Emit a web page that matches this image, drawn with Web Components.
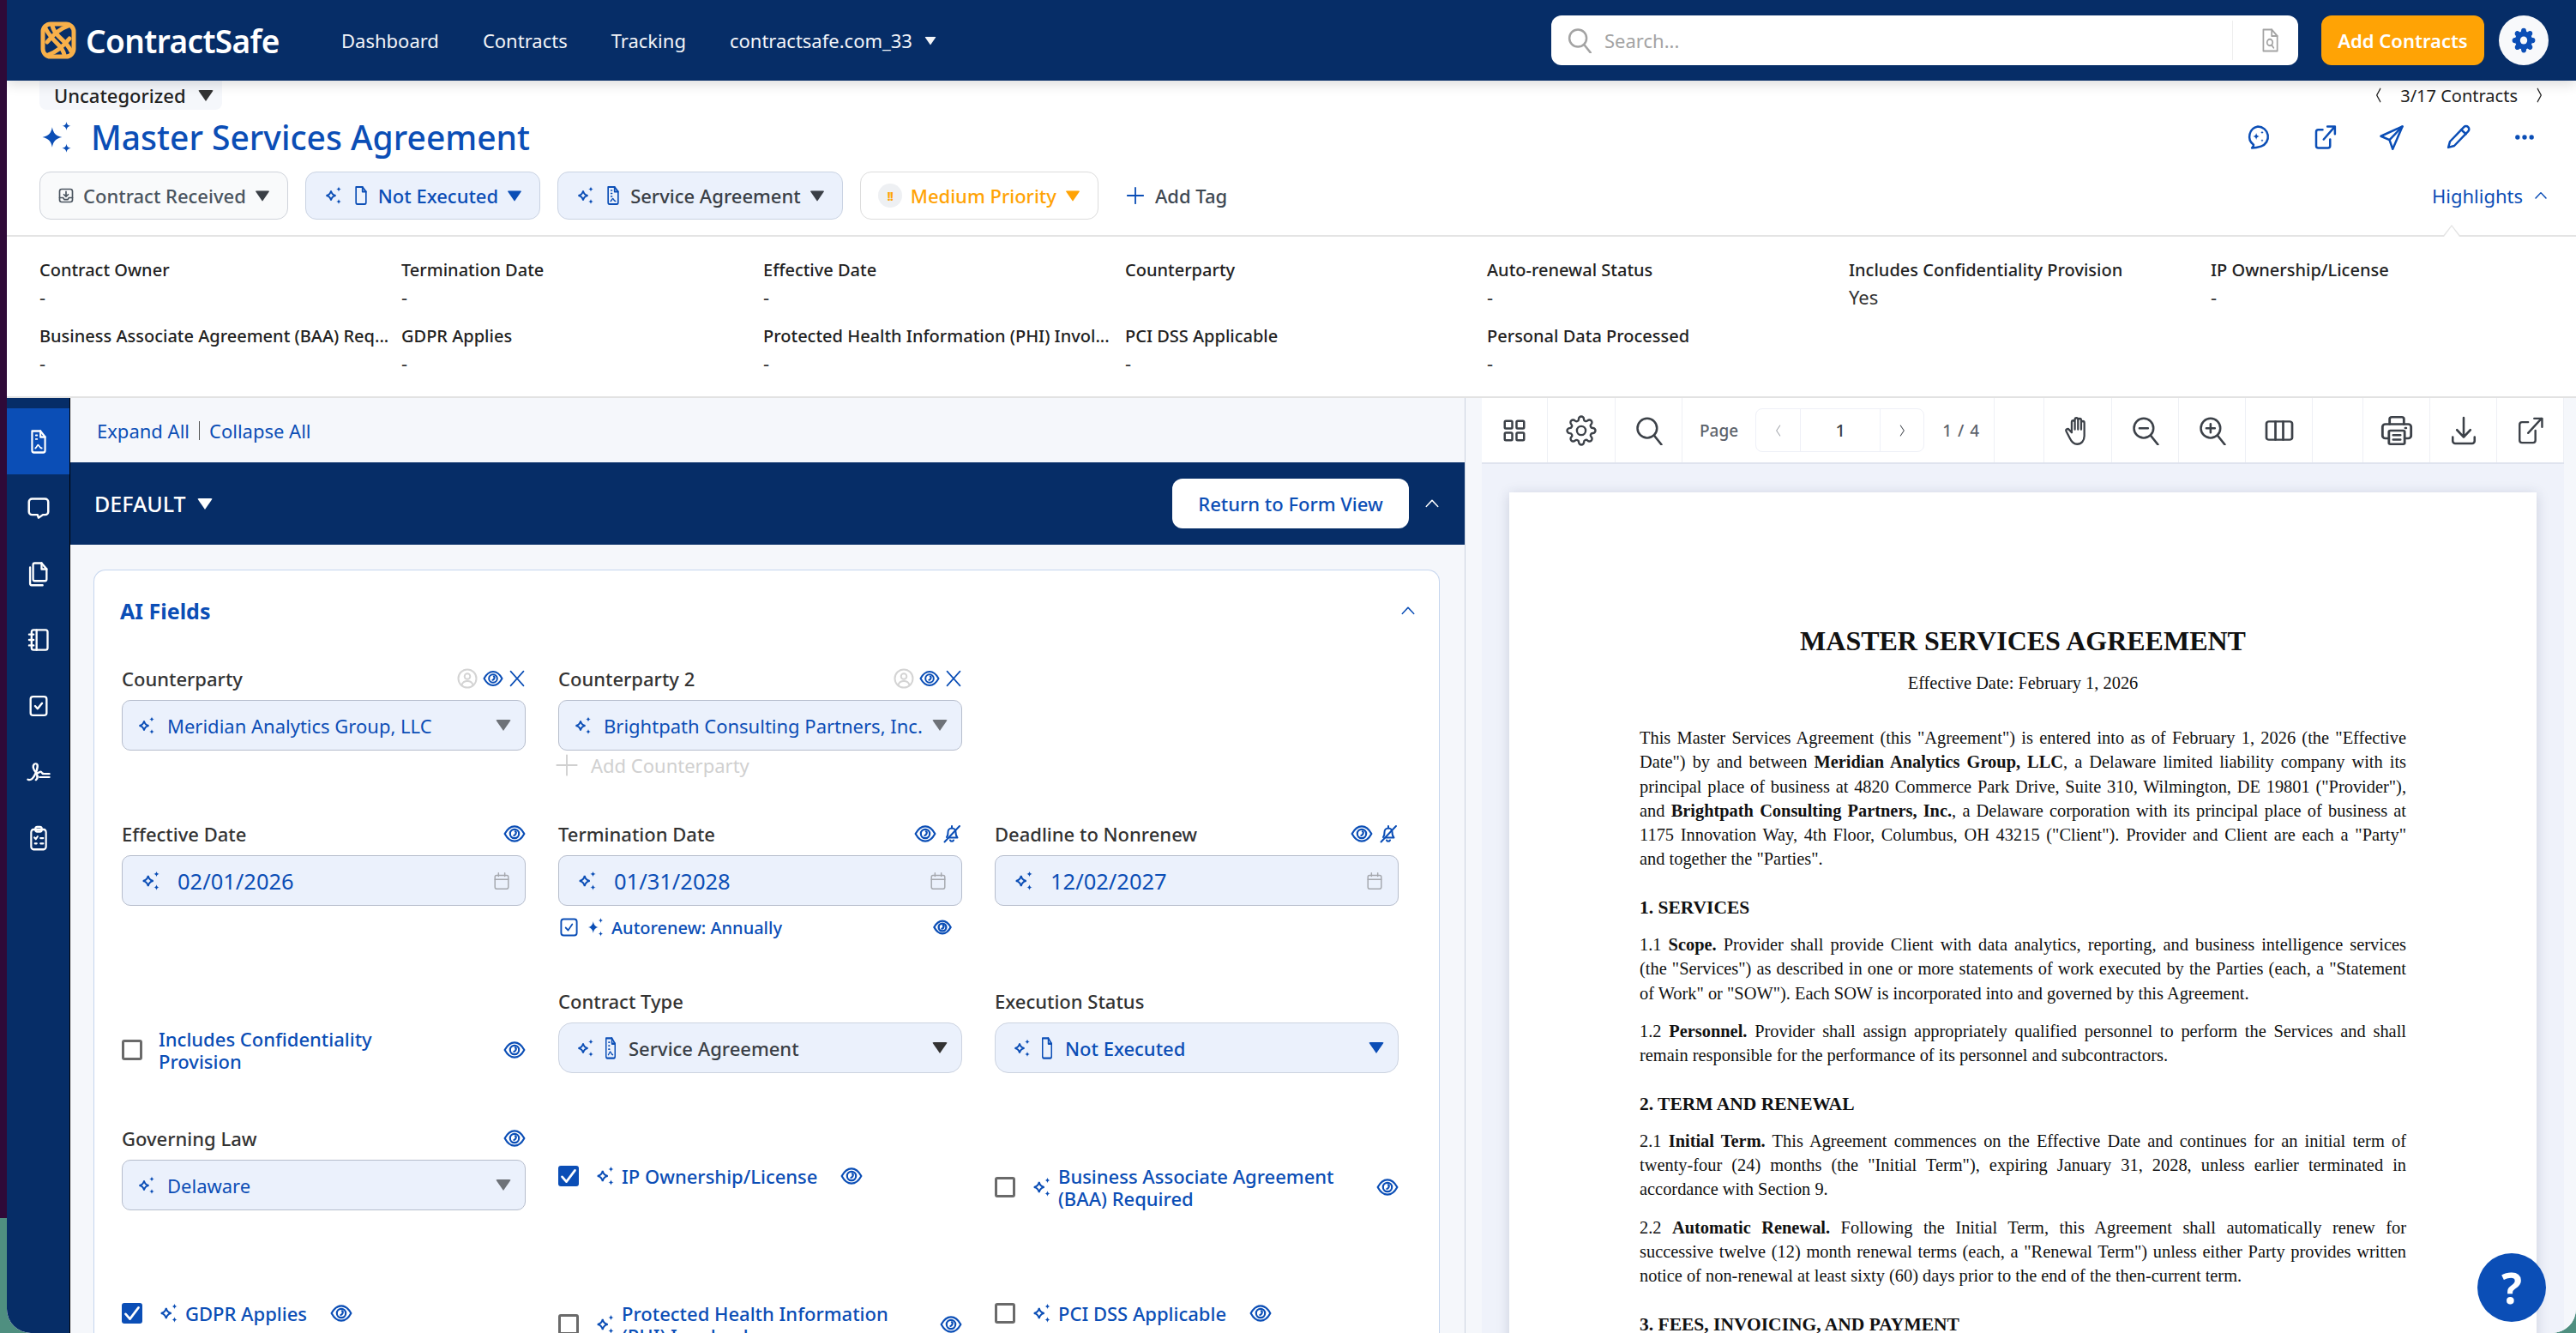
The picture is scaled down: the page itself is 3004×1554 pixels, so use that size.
<!DOCTYPE html>
<html lang="en">
<head>
<meta charset="utf-8">
<title>ContractSafe</title>
<style>
html, body { margin: 0; height: 1554px; overflow: hidden; }
body {
  background: linear-gradient(#2f0a38 0, #2f0a38 1420px, #4f8f80 1420px, #4f8f80 100%);
  font: 22px "Noto Sans", sans-serif;
  color: #333;
}
</style>
</head>
<body>
<cs-app>
  <cs-topbar></cs-topbar>
  <cs-record-header></cs-record-header>
  <cs-highlights>
    <cs-hl label="Contract Owner">-</cs-hl>
    <cs-hl label="Termination Date">-</cs-hl>
    <cs-hl label="Effective Date">-</cs-hl>
    <cs-hl label="Counterparty"></cs-hl>
    <cs-hl label="Auto-renewal Status">-</cs-hl>
    <cs-hl label="Includes Confidentiality Provision">Yes</cs-hl>
    <cs-hl label="IP Ownership/License">-</cs-hl>
    <cs-hl label="Business Associate Agreement (BAA) Req...">-</cs-hl>
    <cs-hl label="GDPR Applies">-</cs-hl>
    <cs-hl label="Protected Health Information (PHI) Invol...">-</cs-hl>
    <cs-hl label="PCI DSS Applicable">-</cs-hl>
    <cs-hl label="Personal Data Processed">-</cs-hl>
  </cs-highlights>
  <cs-workspace>
    <cs-sidebar></cs-sidebar>
    <cs-form-panel>
      <cs-form-grid>
        <cs-field label="Counterparty">
          <cs-icon slot="actions" name="person" w="24" h="24" style="color:#d4d4d4"></cs-icon>
          <cs-icon slot="actions" name="eye" w="24" h="24"></cs-icon>
          <cs-icon slot="actions" name="x" w="20" h="20"></cs-icon>
          <cs-select spark caret="gray">Meridian Analytics Group, LLC</cs-select>
        </cs-field>
        <cs-field label="Counterparty 2">
          <cs-icon slot="actions" name="person" w="24" h="24" style="color:#d4d4d4"></cs-icon>
          <cs-icon slot="actions" name="eye" w="24" h="24"></cs-icon>
          <cs-icon slot="actions" name="x" w="20" h="20"></cs-icon>
          <cs-select spark caret="gray">Brightpath Consulting Partners, Inc.</cs-select>
          <cs-add-row>Add Counterparty</cs-add-row>
        </cs-field>
        <div></div>

        <cs-field label="Effective Date">
          <cs-icon slot="actions" name="eye" w="26" h="26"></cs-icon>
          <cs-select spark date>02/01/2026</cs-select>
        </cs-field>
        <cs-field label="Termination Date">
          <cs-icon slot="actions" name="eye" w="26" h="26"></cs-icon>
          <cs-icon slot="actions" name="belloff" w="24" h="24"></cs-icon>
          <cs-select spark date>01/31/2028</cs-select>
          <cs-autorenew>Autorenew: Annually</cs-autorenew>
        </cs-field>
        <cs-field label="Deadline to Nonrenew">
          <cs-icon slot="actions" name="eye" w="26" h="26"></cs-icon>
          <cs-icon slot="actions" name="belloff" w="24" h="24"></cs-icon>
          <cs-select spark date>12/02/2027</cs-select>
        </cs-field>

        <cs-check drop wide nospark>Includes Confidentiality<br>Provision</cs-check>
        <cs-field label="Contract Type">
          <cs-select spark doc="contract" tone="dark" round caret="dark">Service Agreement</cs-select>
        </cs-field>
        <cs-field label="Execution Status">
          <cs-select spark doc="blank" round caret="blue">Not Executed</cs-select>
        </cs-field>

        <cs-field label="Governing Law">
          <cs-icon slot="actions" name="eye" w="26" h="26"></cs-icon>
          <cs-select spark caret="gray">Delaware</cs-select>
        </cs-field>
        <cs-check drop checked>IP Ownership/License</cs-check>
        <cs-check drop wide>Business Associate Agreement<br>(BAA) Required</cs-check>

        <cs-check checked>GDPR Applies</cs-check>
        <cs-check wide>Protected Health Information<br>(PHI) Involved</cs-check>
        <cs-check>PCI DSS Applicable</cs-check>
      </cs-form-grid>
    </cs-form-panel>
    <cs-viewer></cs-viewer>
  </cs-workspace>
  <cs-help></cs-help>
</cs-app>

<script>
const BLUE = "#0b4eb6";

// stroke icons share one svg wrapper, the markup is just the inside of a 24x24 box
const ICONS = {
  search: `<circle cx="10.5" cy="10" r="8"/><path d="M16.2 16l6 7.5"/>`,
  docsearch: `<path d="M5 2h9l6 6v14H5z"/><path d="M14 2v6h6"/><circle cx="12" cy="14" r="3"/><path d="M14 16.5l2 2.5"/>`,
  gearfill: `<path fill="currentColor" stroke-width="1" d="M19.4 15a1.65 1.65 0 0 0 .33 1.82l.06.06a2 2 0 0 1 0 2.83 2 2 0 0 1-2.83 0l-.06-.06a1.65 1.65 0 0 0-1.82-.33 1.65 1.65 0 0 0-1 1.51V21a2 2 0 0 1-2 2 2 2 0 0 1-2-2v-.09A1.65 1.65 0 0 0 9 19.4a1.65 1.65 0 0 0-1.82.33l-.06.06a2 2 0 0 1-2.83 0 2 2 0 0 1 0-2.83l.06-.06a1.65 1.65 0 0 0 .33-1.82 1.65 1.65 0 0 0-1.51-1H3a2 2 0 0 1-2-2 2 2 0 0 1 2-2h.09A1.65 1.65 0 0 0 4.6 9a1.65 1.65 0 0 0-.33-1.82l-.06-.06a2 2 0 0 1 0-2.83 2 2 0 0 1 2.83 0l.06.06a1.65 1.65 0 0 0 1.82.33H9a1.65 1.65 0 0 0 1-1.51V3a2 2 0 0 1 2-2 2 2 0 0 1 2 2v.09a1.65 1.65 0 0 0 1 1.51 1.65 1.65 0 0 0 1.82-.33l.06-.06a2 2 0 0 1 2.83 0 2 2 0 0 1 0 2.83l-.06.06a1.65 1.65 0 0 0-.33 1.82V9a1.65 1.65 0 0 0 1.51 1H21a2 2 0 0 1 2 2 2 2 0 0 1-2 2h-.09a1.65 1.65 0 0 0-1.51 1z"/><circle cx="12" cy="12" r="3.6" fill="#f8f9fb" stroke="none"/>`,
  gear: `<path d="M19.4 15a1.65 1.65 0 0 0 .33 1.82l.06.06a2 2 0 0 1 0 2.83 2 2 0 0 1-2.83 0l-.06-.06a1.65 1.65 0 0 0-1.82-.33 1.65 1.65 0 0 0-1 1.51V21a2 2 0 0 1-2 2 2 2 0 0 1-2-2v-.09A1.65 1.65 0 0 0 9 19.4a1.65 1.65 0 0 0-1.82.33l-.06.06a2 2 0 0 1-2.83 0 2 2 0 0 1 0-2.83l.06-.06a1.65 1.65 0 0 0 .33-1.82 1.65 1.65 0 0 0-1.51-1H3a2 2 0 0 1-2-2 2 2 0 0 1 2-2h.09A1.65 1.65 0 0 0 4.6 9a1.65 1.65 0 0 0-.33-1.82l-.06-.06a2 2 0 0 1 0-2.83 2 2 0 0 1 2.83 0l.06.06a1.65 1.65 0 0 0 1.82.33H9a1.65 1.65 0 0 0 1-1.51V3a2 2 0 0 1 2-2 2 2 0 0 1 2 2v.09a1.65 1.65 0 0 0 1 1.51 1.65 1.65 0 0 0 1.82-.33l.06-.06a2 2 0 0 1 2.83 0 2 2 0 0 1 0 2.83l-.06.06a1.65 1.65 0 0 0-.33 1.82V9a1.65 1.65 0 0 0 1.51 1H21a2 2 0 0 1 2 2 2 2 0 0 1-2 2h-.09a1.65 1.65 0 0 0-1.51 1z"/><circle cx="12" cy="12" r="3.4"/>`,
  spark: `<path stroke-width="1.8" stroke-linejoin="miter" d="M9 6.5C9.6 9.6 11.2 11.4 14.5 12 11.2 12.6 9.6 14.4 9 17.5 8.4 14.4 6.8 12.6 3.5 12 6.8 11.4 8.4 9.6 9 6.5z"/><path fill="currentColor" stroke="none" d="M18 1.5c.3 1.9 1 2.7 3 3-2 .3-2.7 1.1-3 3-.3-1.9-1-2.7-3-3 2-.3 2.7-1.1 3-3zM18 16c.3 1.9 1 2.7 3 3-2 .3-2.7 1.1-3 3-.3-1.9-1-2.7-3-3 2-.3 2.7-1.1 3-3z"/>`,
  sparkfill: `<path fill="currentColor" stroke="none" d="M8.5 5C9.2 9.2 11 11.2 15 12 11 12.8 9.2 14.8 8.5 19 7.8 14.8 6 12.8 2 12 6 11.2 7.8 9.2 8.5 5z"/><path fill="currentColor" stroke="none" d="M18 1c.3 2 1 2.8 3 3.1-2 .3-2.7 1.1-3 3.1-.3-2-1-2.8-3-3.1 2-.3 2.7-1.1 3-3.1zM18 16.500c.3 2 1 2.800 3 3.100-2 .3-2.700 1.100-3 3.100-.3-2-1-2.800-3-3.100 2-.3 2.700-1.100 3-3.100z"/>`,
  docblank: `<path d="M5 2h9l5 5.500V20a2 2 0 0 1-2 2H7a2 2 0 0 1-2-2z"/><path d="M14 2v5.500h5"/>`,
  doccontract: `<path d="M5 2h9l5 5.500V20a2 2 0 0 1-2 2H7a2 2 0 0 1-2-2z"/><path d="M14 2v5.500h5"/><path d="M9 6h1.500M9 9.500h1.500M9 13h1.500" stroke-width="1.500"/><path d="M8.500 18.500c1.500-.5 2-3 3-3s1.500 3 4 3" stroke-width="1.500"/>`,
  inbox: `<rect x="3" y="3" width="18" height="18" rx="3"/><path d="M3 15h5l1.500 2.500h5L16 15h5"/><path d="M12 6.500v6.500M9 10.500l3 3 3-3"/>`,
  chatspark: `<path d="M12 2a9.500 9.500 0 0 1 3 18.500c-2.500.8-5 1.500-8.500 1.500 1.200-1 1.600-2 1.500-3A9.500 9.500 0 0 1 12 2z"/><path fill="currentColor" stroke="none" d="M10.500 8c.3 2 1 2.800 3 3.200-2 .4-2.700 1.200-3 3.200-.3-2-1-2.800-3-3.200 2-.4 2.700-1.200 3-3.200zM16 6c.2 1 .5 1.300 1.500 1.500-1 .2-1.300.5-1.500 1.500-.2-1-.5-1.300-1.500-1.500 1-.2 1.300-.5 1.500-1.500zM16 13.500c.2 1 .5 1.300 1.500 1.500-1 .2-1.300.5-1.500 1.500-.2-1-.5-1.300-1.500-1.500 1-.2 1.300-.5 1.500-1.500z"/>`,
  external: `<path d="M10 5H6a2 2 0 0 0-2 2v13a2 2 0 0 0 2 2h9a2 2 0 0 0 2-2v-6"/><path d="M11 14L21 2.500M14.500 2H21.500V9"/>`,
  send: `<path stroke-linejoin="round" d="M22 2L2 11l8 3.500L13 23z"/><path d="M22 2L10 14.500"/>`,
  pencil: `<path stroke-linejoin="round" d="M17 2.500a2.800 2.800 0 0 1 4 4L8 20l-5.500 1.500L4 16z"/><path d="M14.500 5l4.500 4"/>`,
  dots: `<circle cx="5" cy="12" r="2.300" fill="currentColor" stroke="none"/><circle cx="12" cy="12" r="2.300" fill="currentColor" stroke="none"/><circle cx="19" cy="12" r="2.300" fill="currentColor" stroke="none"/>`,
  up: `<path d="M4 16.500L12 7l8 9.500"/>`,
  left: `<path d="M15 3L8 12l7 9"/>`,
  right: `<path d="M9 3l7 9-7 9"/>`,
  eye: `<path stroke-linejoin="round" d="M1.500 12C4.500 6.500 8 4 12 4s7.500 2.500 10.500 8C19.500 17.500 16 20 12 20S4.500 17.500 1.500 12z"/><circle cx="12" cy="12" r="4.800"/><path d="M12.800 9.500c.8.300 1 1.200.6 2.300-.3.800-1 1.700-2 2"/>`,
  x: `<path d="M3 2l18 20M21 2L3 22"/>`,
  person: `<circle cx="12" cy="12" r="10.500"/><circle cx="12" cy="9.500" r="3.300"/><path d="M5.500 19.500c1-3.500 3.500-4.500 6.500-4.500s5.500 1 6.500 4.500"/>`,
  belloff: `<path d="M6 16c1.500-1.500 1.500-3.500 1.500-6A4.500 4.500 0 0 1 12 5.500 4.500 4.500 0 0 1 16.500 10c0 2.500 0 4.500 2 6.500H9"/><path d="M10 19.500a2.200 2.200 0 0 0 4 0M12 3v2.500M3.500 21.500L21 3"/>`,
  calendar: `<rect x="3.500" y="5" width="17" height="17" rx="2"/><path d="M3.500 10h17M8 2v4M16 2v4"/>`,
  plus: `<path d="M12 2v20M2 12h20"/>`,
  boxcheck: `<rect x="2.500" y="2.500" width="19" height="19" rx="3"/><path d="M8 12.500l3 3 5-7" stroke-width="1.800"/>`,
  grid: `<rect x="3" y="3" width="7" height="7" rx="1"/><rect x="14" y="3" width="7" height="7" rx="1"/><rect x="3" y="14" width="7" height="7" rx="1"/><rect x="14" y="14" width="7" height="7" rx="1"/>`,
  hand: `<path stroke-linejoin="round" d="M7 13V5.500a1.300 1.300 0 0 1 2.600 0V11M9.600 11V3.500a1.300 1.300 0 0 1 2.600 0V11M12.200 11V4a1.300 1.300 0 0 1 2.600 0v7M14.800 11V6a1.300 1.300 0 0 1 2.600 0v10c0 4-2.500 6.500-5.900 6.500-3 0-4.500-1.500-6-4.500l-3-5.500c-.7-1.500 1.300-2.500 2.300-1.200L7 13.500"/>`,
  zoomout: `<circle cx="10.500" cy="10" r="8"/><path d="M16.200 16l6 7.500M7 10h7"/>`,
  zoomin: `<circle cx="10.500" cy="10" r="8"/><path d="M16.200 16l6 7.500M7 10h7M10.500 6.500v7"/>`,
  columns: `<rect x="2" y="3.500" width="20" height="17" rx="2"/><path d="M9 3.500v17M15 3.500v17"/>`,
  printer: `<path d="M7 7V3a1.500 1.500 0 0 1 1.500-1.500h7A1.500 1.500 0 0 1 17 3v4"/><path d="M6.500 18H4a2 2 0 0 1-2-2V9a2 2 0 0 1 2-2h16a2 2 0 0 1 2 2v7a2 2 0 0 1-2 2h-2.500"/><rect x="6.500" y="12" width="11" height="10.500" rx="1"/><path d="M9.500 15.500h5M9.500 19h5M18 10h.5"/>`,
  download: `<path d="M12 2v15M6.500 11.500L12 17l5.500-5.500M3 17v3a2 2 0 0 0 2 2h14a2 2 0 0 0 2-2v-3"/>`,
  openout: `<path d="M10 5H5a2 2 0 0 0-2 2v13a2 2 0 0 0 2 2h9a2 2 0 0 0 2-2v-8"/><path d="M10 14L21 2M15 2h6.500V9"/>`,
  sbfile: `<path d="M5 2h9l5 5.500V20a2 2 0 0 1-2 2H7a2 2 0 0 1-2-2z"/><path d="M14 2v5.500h5"/><path d="M9 6h1.500M9 9.500h1.500" stroke-width="1.500"/><path d="M8.500 18c1.500-.5 2-3 3-3s1.500 3 4 3" stroke-width="1.500"/>`,
  sbchat: `<path stroke-linejoin="round" d="M6 3h12a3 3 0 0 1 3 3v10a3 3 0 0 1-3 3h-2l-4 3-1-3H6a3 3 0 0 1-3-3V6a3 3 0 0 1 3-3z"/>`,
  sbdocs: `<path d="M8 2h7l5 5.500V17a1.500 1.500 0 0 1-1.500 1.500H8A1.500 1.500 0 0 1 6.500 17V3.500A1.500 1.500 0 0 1 8 2z"/><path d="M15 2v5.500h5M3.500 6v15a1.500 1.500 0 0 0 1.500 1.500h11"/>`,
  sbbook: `<rect x="5" y="2" width="16" height="20" rx="2"/><path d="M10 2v20M2.500 6.500h4.500M2.500 12h4.500M2.500 17.500h4.500"/>`,
  sbtask: `<rect x="4" y="2" width="16" height="20" rx="2.500"/><path d="M8.500 12l2.500 3 4.500-6" stroke-width="2"/>`,
  sbsign: `<path d="M2 20c3 1.500 5-1 7-6s3-11 .5-11S6 7 8 10c2.500 3.500 4 8 1.500 10.500"/><path d="M11 13c1.500 0 2-1.500 3-1.500s.5 2 2 2M13 17.500h9M16 14h6"/>`,
  sbclip: `<rect x="4" y="4" width="16" height="18.500" rx="2.500"/><rect x="8.500" y="1.500" width="7" height="4.500" rx="2"/><path d="M7.500 11.500l1.500 1.500 2-2.500M14 12h3M8 17h2M14 17h3" stroke-width="1.800"/>`
};

class CsIcon extends HTMLElement {
  connectedCallback() {
    if (this.shadowRoot) return;
    const w = this.getAttribute("w") || 24;
    const h = this.getAttribute("h") || w;
    const sw = this.getAttribute("sw") || 2;
    this.attachShadow({ mode: "open" });
    this.shadowRoot.innerHTML = `
      <style>:host{display:inline-flex;flex:none;width:${w}px;height:${h}px} svg{display:block}</style>
      <svg width="${w}" height="${h}" viewBox="0 0 24 24" preserveAspectRatio="none" fill="none" stroke="currentColor" stroke-width="${sw}" stroke-linecap="round" stroke-linejoin="round">${ICONS[this.getAttribute("name")] || ""}</svg>`;
  }
}
customElements.define("cs-icon", CsIcon);

// small triangle used by every dropdown
class CsCaret extends HTMLElement {
  constructor() {
    super();
    this.attachShadow({ mode: "open" });
    this.shadowRoot.innerHTML = `
      <style>:host{display:inline-block;flex:none;width:0;height:0;border-left:9px solid transparent;border-right:9px solid transparent;border-top:13px solid currentColor;border-radius:2px}</style>`;
  }
}
customElements.define("cs-caret", CsCaret);

const appTemplate = document.createElement("template");
appTemplate.innerHTML = `
<style>
:host{display:flex;flex-direction:column;position:relative;margin-left:8px;height:1554px;background:#fff;overflow:hidden;border-radius:0 0 28px 28px}
</style>
<slot></slot>`;
class CsApp extends HTMLElement {
  constructor() {
    super();
    this.attachShadow({ mode: "open" });
    this.shadowRoot.appendChild(appTemplate.content.cloneNode(true));
  }
}
customElements.define("cs-app", CsApp);

const topbarTemplate = document.createElement("template");
topbarTemplate.innerHTML = `
<style>
:host{display:flex;align-items:center;flex:none;height:94px;background:#062d67;color:#fff;padding:0 32px 0 38px;box-sizing:border-box;position:relative;z-index:2;box-shadow:0 4px 14px rgba(0,0,0,.14)}
.logo{display:flex;align-items:center;width:352px;flex:none;gap:10px;font-size:37px;font-weight:600;letter-spacing:-.6px}
nav{display:flex;align-items:center;flex:1;gap:51px;font-size:22px;color:#f2f4f8}
.acct{display:flex;align-items:center;gap:12px}
.acct cs-caret{transform:scale(.75)}
.search{display:flex;align-items:center;width:871px;height:58px;background:#fff;border-radius:12px;box-sizing:border-box;padding:0 20px 0 18px;color:#a3a3a3;gap:14px;font-size:22px}
.search span{flex:1}
.search i{width:1px;height:46px;background:#eee;margin-right:16px}
.add{display:flex;align-items:center;justify-content:center;width:190px;height:58px;margin-left:27px;background:#ffa305;border-radius:12px;font-size:22px;font-weight:600}
.gear{display:flex;align-items:center;justify-content:center;width:58px;height:58px;margin-left:17px;background:#f8f9fb;border-radius:50%;color:${BLUE}}
</style>
<div class="logo">
  <svg width="44" height="44" viewBox="0 0 44 44" fill="none" stroke="#f8b04a" stroke-width="5" stroke-linecap="round" stroke-linejoin="round">
    <path d="M13 3h18c5 0 9 4 9 9v20c0 5-4 9-9 9H13c-5 0-9-4-9-9V12c0-5 4-9 9-9z"/>
    <path d="M34 5C25 8 17 14 9 24M10 39c9-3 17-9 25-19"/>
    <path d="M7 8c4 8 10 14 14 18s7 8 8 13M15 5c1 5 4 9 8 13s10 8 14 17"/>
  </svg>
  <span>ContractSafe</span>
</div>
<nav>
  <span>Dashboard</span>
  <span>Contracts</span>
  <span>Tracking</span>
  <span class="acct">contractsafe.com_33<cs-caret></cs-caret></span>
</nav>
<div class="search">
  <cs-icon name="search" w="30" h="30"></cs-icon>
  <span>Search...</span>
  <i></i>
  <cs-icon name="docsearch" w="26" h="30" sw="1.6"></cs-icon>
</div>
<div class="add">Add Contracts</div>
<div class="gear"><cs-icon name="gearfill" w="28" h="30"></cs-icon></div>`;
class CsTopbar extends HTMLElement {
  constructor() {
    super();
    this.attachShadow({ mode: "open" });
    this.shadowRoot.appendChild(topbarTemplate.content.cloneNode(true));
  }
}
customElements.define("cs-topbar", CsTopbar);

const pillTemplate = document.createElement("template");
pillTemplate.innerHTML = `
<style>
:host{display:inline-flex;align-items:center;height:56px;box-sizing:border-box;padding:0 20px;gap:10px;border:1.5px solid #cfd3da;border-radius:13px;background:#f9fafb;color:#4b5560;font-size:22px;font-weight:500;white-space:nowrap}
:host([ai]){background:#ebf1fc;border-color:#c9d2e2}
:host([tone=blue]){color:${BLUE}}
:host([tone=dark]){color:#3a3f46}
:host([tone=orange]){background:#fff;color:#ffa305;border-color:#dcdcdc}
cs-caret{transform:scale(.95);color:var(--caret,#3a3f46)}
:host([tone=blue]) cs-caret{color:${BLUE}}
:host([tone=orange]) cs-caret{color:#ffa305}
::slotted(cs-icon){color:${BLUE}}
::slotted(.prio){display:inline-flex;align-items:center;justify-content:center;width:28px;height:28px;border-radius:50%;background:#eef0f3;color:#ffa305;font-size:15px;font-weight:700;letter-spacing:-1px}
</style>
<slot name="icons"></slot><slot></slot><cs-caret></cs-caret>`;
class CsPill extends HTMLElement {
  constructor() {
    super();
    this.attachShadow({ mode: "open" });
    this.shadowRoot.appendChild(pillTemplate.content.cloneNode(true));
  }
}
customElements.define("cs-pill", CsPill);

const headerTemplate = document.createElement("template");
headerTemplate.innerHTML = `
<style>
:host{display:flex;flex-direction:column;flex:none;height:182px;box-sizing:border-box;padding:0 34px 0 38px;border-bottom:2px solid #e4e4e4;background:#fff;position:relative}
.top{display:flex;justify-content:space-between;align-items:center;height:34px;flex:none}
.chip{display:flex;align-items:center;gap:14px;height:34px;box-sizing:border-box;padding:0 10px 0 17px;background:#f5f7fb;border-radius:0 0 8px 8px;color:#222;font-weight:500;font-size:22px}
.chip cs-caret{color:#333}
.count{display:flex;align-items:center;gap:18px;font-size:20px;color:#222;margin-right:2px}
.title{display:flex;align-items:center;height:60px;flex:none;gap:18px;margin-top:2px}
h1{flex:1;margin:0;font-size:39px;font-weight:500;color:${BLUE};line-height:60px}
.spark{color:${BLUE}}
.actions{display:flex;gap:48px;color:${BLUE};align-items:center;margin-right:12px}
.pills{display:flex;align-items:center;gap:20px;margin-top:10px}
.tag{display:flex;align-items:center;gap:12px;margin-left:12px;color:#3e4853;font-weight:500}
.tag cs-icon{color:${BLUE}}
.hl{margin-left:auto;display:flex;align-items:center;gap:12px;color:${BLUE};margin-right:-2px}
.notch{position:absolute;left:2840px;bottom:-2px;width:0;height:0;border-left:11px solid transparent;border-right:11px solid transparent;border-bottom:14px solid #e4e4e4}
.notch::after{content:"";position:absolute;left:-9px;top:2px;border-left:9px solid transparent;border-right:9px solid transparent;border-bottom:12px solid #fff}
</style>
<div class="top">
  <div class="chip">Uncategorized <cs-caret></cs-caret></div>
  <div class="count"><cs-icon name="left" w="14" h="20"></cs-icon>3/17 Contracts<cs-icon name="right" w="14" h="20"></cs-icon></div>
</div>
<div class="title">
  <cs-icon class="spark" name="sparkfill" w="42" h="40"></cs-icon>
  <h1>Master Services Agreement</h1>
  <div class="actions">
    <cs-icon name="chatspark" w="30" h="30"></cs-icon>
    <cs-icon name="external" w="30" h="30"></cs-icon>
    <cs-icon name="send" w="30" h="30"></cs-icon>
    <cs-icon name="pencil" w="30" h="30"></cs-icon>
    <cs-icon name="dots" w="28" h="28"></cs-icon>
  </div>
</div>
<div class="pills">
  <cs-pill tone="gray"><cs-icon slot="icons" name="inbox" w="20" h="20" style="color:#4b5560"></cs-icon>Contract Received</cs-pill>
  <cs-pill ai tone="blue"><cs-icon slot="icons" name="spark" w="24" h="24"></cs-icon><cs-icon slot="icons" name="docblank" w="20" h="24"></cs-icon>Not Executed</cs-pill>
  <cs-pill ai tone="dark"><cs-icon slot="icons" name="spark" w="24" h="24"></cs-icon><cs-icon slot="icons" name="doccontract" w="20" h="24"></cs-icon>Service Agreement</cs-pill>
  <cs-pill tone="orange"><span slot="icons" class="prio">!!</span>Medium Priority</cs-pill>
  <div class="tag"><cs-icon name="plus" w="22" h="22"></cs-icon>Add Tag</div>
  <div class="hl">Highlights <cs-icon name="up" w="18" h="16"></cs-icon></div>
</div>
<div class="notch"></div>`;
class CsRecordHeader extends HTMLElement {
  constructor() {
    super();
    this.attachShadow({ mode: "open" });
    this.shadowRoot.appendChild(headerTemplate.content.cloneNode(true));
  }
}
customElements.define("cs-record-header", CsRecordHeader);

const highlightsTemplate = document.createElement("template");
highlightsTemplate.innerHTML = `
<style>
:host{display:grid;flex:none;grid-template-columns:repeat(7,422px);grid-template-rows:63px 63px;row-gap:14px;align-content:start;height:188px;box-sizing:border-box;padding:24px 0 0 38px;border-bottom:2px solid #e2e2e2;background:#fff}
</style>
<slot></slot>`;
class CsHighlights extends HTMLElement {
  constructor() {
    super();
    this.attachShadow({ mode: "open" });
    this.shadowRoot.appendChild(highlightsTemplate.content.cloneNode(true));
  }
}
customElements.define("cs-highlights", CsHighlights);

class CsHl extends HTMLElement {
  constructor() {
    super();
    this.attachShadow({ mode: "open" });
    this.shadowRoot.innerHTML = `
      <style>
      :host{display:block;font-size:22px;color:#333;line-height:33px}
      .l{font-size:20px;font-weight:500;color:#222;line-height:30px;white-space:nowrap}
      </style>
      <div class="l"></div><slot></slot>`;
    this.shadowRoot.querySelector(".l").textContent = this.getAttribute("label");
  }
}
customElements.define("cs-hl", CsHl);

const workspaceTemplate = document.createElement("template");
workspaceTemplate.innerHTML = `
<style>:host{display:flex;flex:1;min-height:0;overflow:hidden;background:#f5f7fb}</style>
<slot></slot>`;
class CsWorkspace extends HTMLElement {
  constructor() {
    super();
    this.attachShadow({ mode: "open" });
    this.shadowRoot.appendChild(workspaceTemplate.content.cloneNode(true));
  }
}
customElements.define("cs-workspace", CsWorkspace);

const sidebarTemplate = document.createElement("template");
sidebarTemplate.innerHTML = `
<style>
:host{display:flex;flex-direction:column;flex:none;width:74px;box-sizing:border-box;padding-top:12px;background:#062d67;border-right:1px solid #000;color:#fff}
div{display:flex;align-items:center;justify-content:center;height:77px;flex:none}
.on{background:#0b4eb6}
</style>
<div class="on"><cs-icon name="sbfile" w="26" h="30"></cs-icon></div>
<div><cs-icon name="sbchat" w="30" h="28"></cs-icon></div>
<div><cs-icon name="sbdocs" w="28" h="30"></cs-icon></div>
<div><cs-icon name="sbbook" w="28" h="28"></cs-icon></div>
<div><cs-icon name="sbtask" w="28" h="26"></cs-icon></div>
<div><cs-icon name="sbsign" w="30" h="26"></cs-icon></div>
<div><cs-icon name="sbclip" w="26" h="30"></cs-icon></div>`;
class CsSidebar extends HTMLElement {
  constructor() {
    super();
    this.attachShadow({ mode: "open" });
    this.shadowRoot.appendChild(sidebarTemplate.content.cloneNode(true));
  }
}
customElements.define("cs-sidebar", CsSidebar);

const panelTemplate = document.createElement("template");
panelTemplate.innerHTML = `
<style>
:host{display:block;flex:none;width:1627px;box-sizing:border-box;border-right:1px solid #ccd3e0;background:#f5f7fb}
.links{display:flex;align-items:center;height:75px;padding-left:31px;gap:11px;color:${BLUE};font-size:22px}
.links i{width:1px;height:22px;background:#555}
.band{display:flex;align-items:center;height:96px;background:#062d67;color:#fff;padding:0 28px}
.band b{font-weight:500;font-size:25px;margin-right:13px}
.band cs-caret{transform:scale(1);margin-right:auto}
.back{display:flex;align-items:center;justify-content:center;width:276px;height:58px;background:#fff;border-radius:12px;color:${BLUE};font-size:22px;font-weight:500;margin-right:17px}
.card{margin:29px 29px 0 27px;background:#fff;border:1.5px solid #c5d5ee;border-bottom:0;border-radius:14px 14px 0 0;padding:0 0 0 32px;height:1000px}
.head{display:flex;align-items:center;justify-content:space-between;height:94px;padding-right:28px;color:${BLUE}}
.head span{font-size:25px;font-weight:700;margin-left:-2px}
.head cs-icon{margin-right:-2px}
::slotted(cs-form-grid){margin-top:19px}
</style>
<div class="links"><span>Expand All</span><i></i><span>Collapse All</span></div>
<div class="band">
  <b>DEFAULT</b><cs-caret></cs-caret>
  <div class="back">Return to Form View</div>
  <cs-icon name="up" w="20" h="18"></cs-icon>
</div>
<div class="card">
  <div class="head"><span>AI Fields</span><cs-icon name="up" w="20" h="18"></cs-icon></div>
  <slot></slot>
</div>`;
class CsFormPanel extends HTMLElement {
  constructor() {
    super();
    this.attachShadow({ mode: "open" });
    this.shadowRoot.appendChild(panelTemplate.content.cloneNode(true));
  }
}
customElements.define("cs-form-panel", CsFormPanel);

const gridTemplate = document.createElement("template");
gridTemplate.innerHTML = `
<style>
:host{display:grid;grid-template-columns:471px 471px 471px;column-gap:38px;grid-template-rows:181px 195px 160px 204px 80px}
</style>
<slot></slot>`;
class CsFormGrid extends HTMLElement {
  constructor() {
    super();
    this.attachShadow({ mode: "open" });
    this.shadowRoot.appendChild(gridTemplate.content.cloneNode(true));
  }
}
customElements.define("cs-form-grid", CsFormGrid);

class CsField extends HTMLElement {
  constructor() {
    super();
    this.attachShadow({ mode: "open" });
    this.shadowRoot.innerHTML = `
      <style>
      :host{display:block;min-width:0}
      .row{display:flex;align-items:center;justify-content:space-between;height:26px;margin-bottom:12px;line-height:26px}
      .l{font-size:22px;font-weight:500;color:#333}
      .a{display:flex;align-items:center;gap:6px;color:${BLUE}}
      </style>
      <div class="row"><span class="l"></span><span class="a"><slot name="actions"></slot></span></div>
      <slot></slot>`;
    this.shadowRoot.querySelector(".l").textContent = this.getAttribute("label");
  }
}
customElements.define("cs-field", CsField);

class CsSelect extends HTMLElement {
  constructor() {
    super();
    this.attachShadow({ mode: "open" });
    const date = this.hasAttribute("date");
    const doc = this.getAttribute("doc");
    const caret = this.getAttribute("caret");
    const docIcon = doc ? `<cs-icon class="doc" name="${doc === "blank" ? "docblank" : "doccontract"}" w="18" h="28"></cs-icon>` : "";
    this.shadowRoot.innerHTML = `
      <style>
      :host{display:flex;align-items:center;height:59px;box-sizing:border-box;padding:0 16px 0 16px;background:#ebf1fc;border:1.5px solid #b6bdcc;border-radius:10px;color:${BLUE};font-size:${date ? 25.5 : 22}px;white-space:nowrap;overflow:hidden;position:relative}
      :host([round]){border-radius:16px;border-color:#ccd3e0;font-weight:500;padding-left:19px}
      :host([tone=dark]){color:#3a3f46}
      :host([date]){padding-left:20px}
      .sp{color:${BLUE};margin-right:${date ? 18 : 12}px}
      :host([round]) .sp{margin-right:8px}
      .doc{color:${BLUE};margin-right:12px}
      .t{flex:1;overflow:hidden}
      .cal{color:#a5a8ae}
      cs-caret{color:${caret === "gray" ? "#6e7278" : caret === "dark" ? "#333" : BLUE};margin-left:-2px}
      </style>
      <cs-icon class="sp" name="spark" w="${date ? 26 : 24}" h="${date ? 26 : 24}"></cs-icon>
      ${docIcon}
      <span class="t"><slot></slot></span>
      ${date ? `<cs-icon class="cal" name="calendar" w="22" h="22" sw="1.6"></cs-icon>` : `<cs-caret></cs-caret>`}`;
  }
}
customElements.define("cs-select", CsSelect);

class CsAddRow extends HTMLElement {
  constructor() {
    super();
    this.attachShadow({ mode: "open" });
    this.shadowRoot.innerHTML = `
      <style>:host{display:flex;align-items:center;gap:14px;height:30px;margin:2px 0 0 -4px;color:#d0d0d0;font-size:22px}</style>
      <cs-icon name="plus" w="28" h="28" sw="1.6"></cs-icon><slot></slot>`;
  }
}
customElements.define("cs-add-row", CsAddRow);

class CsAutorenew extends HTMLElement {
  constructor() {
    super();
    this.attachShadow({ mode: "open" });
    this.shadowRoot.innerHTML = `
      <style>
      :host{display:flex;align-items:center;gap:7px;height:26px;margin-top:12px;padding:0 12px 0 1px;color:${BLUE};font-size:20px;font-weight:500}
      .t{flex:1}
      </style>
      <cs-icon name="boxcheck" w="23" h="24" style="margin-right:2px"></cs-icon>
      <cs-icon name="sparkfill" w="22" h="24"></cs-icon>
      <span class="t"><slot></slot></span>
      <cs-icon name="eye" w="22" h="22" sw="2.6"></cs-icon>`;
  }
}
customElements.define("cs-autorenew", CsAutorenew);

class CsCheck extends HTMLElement {
  constructor() {
    super();
    this.attachShadow({ mode: "open" });
    const checked = this.hasAttribute("checked");
    const spark = this.hasAttribute("nospark") ? "" : `<cs-icon class="sp" name="spark" w="26" h="26"></cs-icon>`;
    this.shadowRoot.innerHTML = `
      <style>
      :host{display:flex;align-items:center;align-self:start;color:${BLUE};font-size:22px;font-weight:500;line-height:26px;white-space:nowrap}
      :host([drop]){margin-top:44px}
      .box{flex:none;width:24px;height:24px;box-sizing:border-box;border-radius:3px;border:3px solid #6a6a6a;margin-right:19px}
      .box.on{background:${BLUE};border:0;display:flex;align-items:center;justify-content:center;color:#fff}
      .sp{margin-right:6px;margin-left:-1px}
      .eye{margin-left:27px}
      :host([wide]) .t{flex:1}
      :host([wide]) .eye{margin-left:auto}
      </style>
      <span class="box ${checked ? "on" : ""}">${checked ? `<cs-icon name="tick" w="20" h="20"></cs-icon>` : ""}</span>
      ${spark}
      <span class="t"><slot></slot></span>
      <cs-icon class="eye" name="eye" w="26" h="26"></cs-icon>`;
  }
}
ICONS.tick = `<path d="M3 13l6 7L21 4" stroke-width="3.200"/>`;
customElements.define("cs-check", CsCheck);

const viewerTemplate = document.createElement("template");
viewerTemplate.innerHTML = `
<style>
:host{display:flex;flex-direction:column;flex:none;width:1262px;margin-left:19px;background:#eff2fa;overflow:hidden}
.bar{display:grid;grid-template-columns:77px 79px 78px 364px 58px 79px 78px 78px 78px 59px 78px 78px 78px;height:77px;flex:none;box-sizing:border-box;background:#fff;border-bottom:2px solid #dfe3ee;color:#3c4148}
.c{display:flex;align-items:center;justify-content:center;border-right:1px solid #eef0f5}
.pg{justify-content:flex-start;padding-left:20px;font-size:19px;color:#5d636b;font-weight:500}
.grp{display:flex;align-items:center;height:51px;margin-left:20px;border:1.5px solid #eef0f7;border-radius:8px;box-sizing:border-box}
.grp span{display:flex;align-items:center;justify-content:center;height:100%;color:#3c4148;font-size:20px}
.grp .p{width:51px;border-right:1.5px solid #eef0f7;color:#9a9ea5}
.grp .n{width:92px;border-right:1.5px solid #eef0f7}
.grp .x{width:50px;color:#3c4148}
.tot{margin-left:21px;font-size:19px;color:#5d636b;letter-spacing:1px}
.scroll{padding-top:33px;flex:1}
</style>
<div class="bar">
  <div class="c"><cs-icon name="grid" w="30" h="30" sw="2"></cs-icon></div>
  <div class="c"><cs-icon name="gear" w="36" h="36" sw="1.6"></cs-icon></div>
  <div class="c"><cs-icon name="search" w="34" h="34" sw="1.8"></cs-icon></div>
  <div class="c pg">Page
    <div class="grp">
      <span class="p"><cs-icon name="left" w="14" h="16" sw="1.600"></cs-icon></span>
      <span class="n">1</span>
      <span class="x"><cs-icon name="right" w="14" h="16" sw="1.600"></cs-icon></span>
    </div>
    <span class="tot">1 / 4</span>
  </div>
  <div class="c"></div>
  <div class="c"><cs-icon name="hand" w="34" h="36" sw="1.600"></cs-icon></div>
  <div class="c"><cs-icon name="zoomout" w="34" h="34" sw="1.800"></cs-icon></div>
  <div class="c"><cs-icon name="zoomin" w="34" h="34" sw="1.800"></cs-icon></div>
  <div class="c"><cs-icon name="columns" w="36" h="30" sw="1.800"></cs-icon></div>
  <div class="c"></div>
  <div class="c"><cs-icon name="printer" w="40" h="36" sw="1.700"></cs-icon></div>
  <div class="c"><cs-icon name="download" w="34" h="36" sw="1.800"></cs-icon></div>
  <div class="c"><cs-icon name="openout" w="34" h="34" sw="1.700"></cs-icon></div>
</div>
<div class="scroll"><cs-pdf-page></cs-pdf-page></div>`;
class CsViewer extends HTMLElement {
  constructor() {
    super();
    this.attachShadow({ mode: "open" });
    this.shadowRoot.appendChild(viewerTemplate.content.cloneNode(true));
  }
}
customElements.define("cs-viewer", CsViewer);

const pageTemplate = document.createElement("template");
pageTemplate.innerHTML = `
<style>
:host{display:block;width:1198px;height:1400px;margin-left:32px;box-sizing:border-box;padding:153px 152px 0;background:#fff;box-shadow:0 2px 14px rgba(40,50,90,.18);font-family:"Liberation Serif",serif;font-size:20.4px;line-height:28.3px;color:#111}
h1{margin:0;font-size:32px;line-height:40px;text-align:center;font-weight:700}
.sub{margin:15px 0 36px;text-align:center;line-height:28px}
h2{margin:28px 0 15px;font-size:21.5px;line-height:28.3px;font-weight:700}
p{margin:0 0 16px}
p span{display:block}
p span.j{text-align:justify;text-align-last:justify}
</style>
<h1>MASTER SERVICES AGREEMENT</h1>
<div class="sub">Effective Date: February 1, 2026</div>
<p>
  <span class="j">This Master Services Agreement (this "Agreement") is entered into as of February 1, 2026 (the "Effective</span>
  <span class="j">Date") by and between <b>Meridian Analytics Group, LLC</b>, a Delaware limited liability company with its</span>
  <span class="j">principal place of business at 4820 Commerce Park Drive, Suite 310, Wilmington, DE 19801 ("Provider"),</span>
  <span class="j">and <b>Brightpath Consulting Partners, Inc.</b>, a Delaware corporation with its principal place of business at</span>
  <span class="j">1175 Innovation Way, 4th Floor, Columbus, OH 43215 ("Client"). Provider and Client are each a "Party"</span>
  <span>and together the "Parties".</span>
</p>
<h2>1. SERVICES</h2>
<p>
  <span class="j">1.1 <b>Scope.</b> Provider shall provide Client with data analytics, reporting, and business intelligence services</span>
  <span class="j">(the "Services") as described in one or more statements of work executed by the Parties (each, a "Statement</span>
  <span>of Work" or "SOW"). Each SOW is incorporated into and governed by this Agreement.</span>
</p>
<p>
  <span class="j">1.2 <b>Personnel.</b> Provider shall assign appropriately qualified personnel to perform the Services and shall</span>
  <span>remain responsible for the performance of its personnel and subcontractors.</span>
</p>
<h2>2. TERM AND RENEWAL</h2>
<p>
  <span class="j">2.1 <b>Initial Term.</b> This Agreement commences on the Effective Date and continues for an initial term of</span>
  <span class="j">twenty-four (24) months (the "Initial Term"), expiring January 31, 2028, unless earlier terminated in</span>
  <span>accordance with Section 9.</span>
</p>
<p>
  <span class="j">2.2 <b>Automatic Renewal.</b> Following the Initial Term, this Agreement shall automatically renew for</span>
  <span class="j">successive twelve (12) month renewal terms (each, a "Renewal Term") unless either Party provides written</span>
  <span>notice of non-renewal at least sixty (60) days prior to the end of the then-current term.</span>
</p>
<h2>3. FEES, INVOICING, AND PAYMENT</h2>`;
class CsPdfPage extends HTMLElement {
  constructor() {
    super();
    this.attachShadow({ mode: "open" });
    this.shadowRoot.appendChild(pageTemplate.content.cloneNode(true));
  }
}
customElements.define("cs-pdf-page", CsPdfPage);

// floating help button, sits over the document
class CsHelp extends HTMLElement {
  constructor() {
    super();
    this.attachShadow({ mode: "open" });
    this.shadowRoot.innerHTML = `
      <style>
      :host{position:absolute;left:2881px;top:1461px;width:80px;height:80px;border-radius:50%;background:${BLUE};color:#fff;display:flex;align-items:center;justify-content:center;font:700 50px "Noto Sans",sans-serif;z-index:3}
      </style>?`;
  }
}
customElements.define("cs-help", CsHelp);
</script>
</body>
</html>
